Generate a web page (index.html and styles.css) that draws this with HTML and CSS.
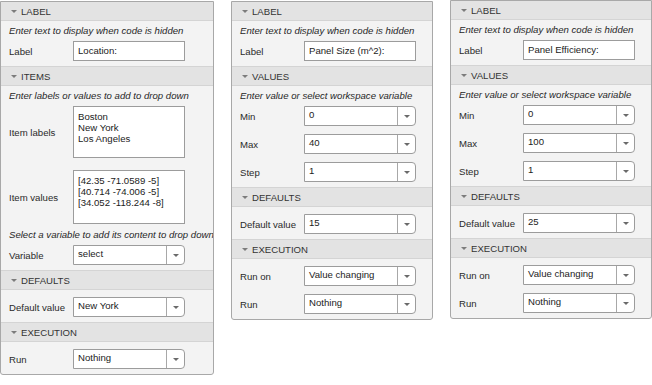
FILE: index.html
```html
<!DOCTYPE html>
<html lang="en">
<head>
<meta charset="utf-8">
<title>Control properties</title>
<link rel="stylesheet" href="styles.css">
</head>
<body>
<div class="page">
  <section class="panel p1">
    <div class="hdr first"><span class="tri"></span>LABEL</div>
    <div class="body desc-body">
      <p class="desc">Enter text to display when code is hidden</p>
      <div class="row"><span class="lbl">Label</span><div class="input">Location:</div></div>
    </div>
    <div class="hdr"><span class="tri"></span>ITEMS</div>
    <div class="body desc-body">
      <p class="desc">Enter labels or values to add to drop down</p>
      <div class="row"><span class="lbl">Item labels</span><div class="ta ta1">Boston<br>New York<br>Los Angeles</div></div>
      <div class="row row-ta2"><span class="lbl">Item values</span><div class="ta ta2">[42.35 -71.0589 -5]<br>[40.714 -74.006 -5]<br>[34.052 -118.244 -8]</div></div>
      <p class="desc desc2">Select a variable to add its content to drop down</p>
      <div class="row"><span class="lbl">Variable</span><div class="dd"><span class="val">select</span><span class="btn"></span></div></div>
    </div>
    <div class="hdr"><span class="tri"></span>DEFAULTS</div>
    <div class="body">
      <div class="row"><span class="lbl">Default value</span><div class="dd"><span class="val">New York</span><span class="btn"></span></div></div>
    </div>
    <div class="hdr"><span class="tri"></span>EXECUTION</div>
    <div class="body">
      <div class="row"><span class="lbl">Run</span><div class="dd"><span class="val">Nothing</span><span class="btn"></span></div></div>
    </div>
  </section>

  <section class="panel p2">
    <div class="hdr first"><span class="tri"></span>LABEL</div>
    <div class="body desc-body">
      <p class="desc">Enter text to display when code is hidden</p>
      <div class="row"><span class="lbl">Label</span><div class="input">Panel Size (m^2):</div></div>
    </div>
    <div class="hdr"><span class="tri"></span>VALUES</div>
    <div class="body desc-body">
      <p class="desc">Enter value or select workspace variable</p>
      <div class="row"><span class="lbl">Min</span><div class="dd"><span class="val">0</span><span class="btn"></span></div></div>
      <div class="row"><span class="lbl">Max</span><div class="dd"><span class="val">40</span><span class="btn"></span></div></div>
      <div class="row"><span class="lbl">Step</span><div class="dd"><span class="val">1</span><span class="btn"></span></div></div>
    </div>
    <div class="hdr"><span class="tri"></span>DEFAULTS</div>
    <div class="body">
      <div class="row"><span class="lbl">Default value</span><div class="dd"><span class="val">15</span><span class="btn"></span></div></div>
    </div>
    <div class="hdr"><span class="tri"></span>EXECUTION</div>
    <div class="body">
      <div class="row"><span class="lbl">Run on</span><div class="dd"><span class="val">Value changing</span><span class="btn"></span></div></div>
      <div class="row"><span class="lbl">Run</span><div class="dd"><span class="val">Nothing</span><span class="btn"></span></div></div>
    </div>
  </section>

  <section class="panel p3">
    <div class="hdr first"><span class="tri"></span>LABEL</div>
    <div class="body desc-body">
      <p class="desc">Enter text to display when code is hidden</p>
      <div class="row"><span class="lbl">Label</span><div class="input">Panel Efficiency:</div></div>
    </div>
    <div class="hdr"><span class="tri"></span>VALUES</div>
    <div class="body desc-body">
      <p class="desc">Enter value or select workspace variable</p>
      <div class="row"><span class="lbl">Min</span><div class="dd"><span class="val">0</span><span class="btn"></span></div></div>
      <div class="row"><span class="lbl">Max</span><div class="dd"><span class="val">100</span><span class="btn"></span></div></div>
      <div class="row"><span class="lbl">Step</span><div class="dd"><span class="val">1</span><span class="btn"></span></div></div>
    </div>
    <div class="hdr"><span class="tri"></span>DEFAULTS</div>
    <div class="body">
      <div class="row"><span class="lbl">Default value</span><div class="dd"><span class="val">25</span><span class="btn"></span></div></div>
    </div>
    <div class="hdr"><span class="tri"></span>EXECUTION</div>
    <div class="body">
      <div class="row"><span class="lbl">Run on</span><div class="dd"><span class="val">Value changing</span><span class="btn"></span></div></div>
      <div class="row"><span class="lbl">Run</span><div class="dd"><span class="val">Nothing</span><span class="btn"></span></div></div>
    </div>
  </section>
</div>
</body>
</html>
```

FILE: styles.css
```css
html, body {
  margin: 0;
  background: #ffffff;
}
body {
  font-family: "Liberation Sans", Arial, sans-serif;
  font-size: 9.6px;
  color: #2a2a2a;
}
.page {
  display: flex;
  align-items: flex-start;
  gap: 17px;
  padding-top: 1px;
}
.panel {
  box-sizing: border-box;
  border: 1px solid #a8a8a8;
  border-radius: 0 0 3px 3px;
  background: #f3f3f3;
  overflow: hidden;
  flex: none;
}
.p1 { width: 214px; }
.p2 { width: 202px; }
.p3 { width: 202px; margin-top: -1px; }

.hdr {
  height: 18px;
  display: flex;
  align-items: center;
  padding-left: 10px;
  background: #e3e3e3;
  border-top: 1px solid #d4d4d4;
  border-bottom: 1px solid #d4d4d4;
  color: #333333;
  letter-spacing: 0;
}
.hdr.first { border-top: 0; }
.tri {
  width: 0;
  height: 0;
  border-left: 3px solid transparent;
  border-right: 3px solid transparent;
  border-top: 3px solid #7c7c7c;
  margin-right: 4px;
}

.body {
  display: flex;
  flex-direction: column;
  gap: 8px;
  padding: 7px 0 5px 8px;
}
.body.desc-body { padding-top: 3px; }
.desc {
  margin: 0 0 -5px 0;
  font-style: italic;
  line-height: 14px;
  white-space: nowrap;
  color: #262626;
}
.desc2 { margin-top: -4px; }

.row {
  display: flex;
  align-items: center;
}
.row-ta2 { margin-top: 4px; }
.lbl {
  width: 64px;
  flex: none;
  white-space: nowrap;
}
.input {
  box-sizing: border-box;
  width: 112px;
  height: 20px;
  border: 1px solid #9c9c9c;
  background: #ffffff;
  padding-left: 4px;
  line-height: 17px;
  white-space: nowrap;
  color: #222222;
}
.ta {
  box-sizing: border-box;
  width: 112px;
  border: 1px solid #9c9c9c;
  background: #ffffff;
  padding: 4px 4px;
  line-height: 11px;
  white-space: nowrap;
  color: #222222;
}
.ta1 { height: 52px; }
.ta2 { height: 54px; }

.dd {
  box-sizing: border-box;
  width: 112px;
  height: 20px;
  display: flex;
  border: 1px solid #9c9c9c;
  border-radius: 0 4px 4px 0;
  background: #ffffff;
  color: #222222;
}
.dd .val {
  flex: 1;
  padding-left: 4px;
  line-height: 16px;
  white-space: nowrap;
  overflow: hidden;
}
.dd .btn {
  width: 17px;
  flex: none;
  border-left: 1px solid #a8a8a8;
  display: flex;
  align-items: center;
  justify-content: center;
}
.dd .btn::after {
  content: "";
  width: 0;
  height: 0;
  border-left: 3px solid transparent;
  border-right: 3px solid transparent;
  border-top: 3px solid #6a6a6a;
}
```
